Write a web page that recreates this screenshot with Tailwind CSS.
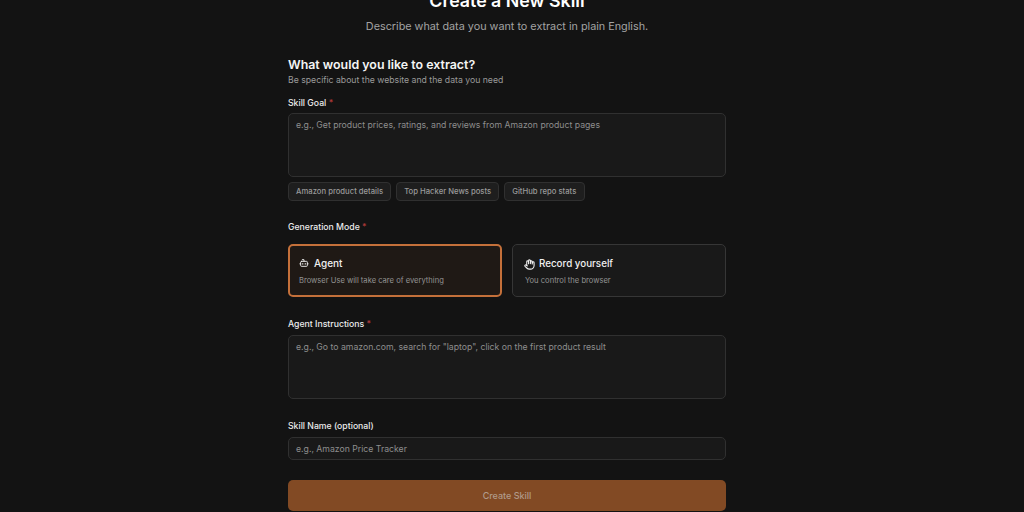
<!DOCTYPE html>
<html lang="en">
<head>
  <meta charset="utf-8" />
  <title>Create a New Skill</title>
  <script src="https://cdn.jsdelivr.net/npm/@tailwindcss/browser@4"></script>
</head>
<body class="bg-[#131313] text-white antialiased font-['Inter',sans-serif] overflow-hidden">
  <main class="h-[512px] overflow-hidden pr-[10px]">
    <div class="w-[438px] mx-auto -mt-[10px]">
      <!-- Heading -->
      <header class="text-center">
        <h1 class="text-[17.8px] leading-[22px] font-semibold">Create a New Skill</h1>
        <p class="mt-[6px] text-[10.8px] leading-[18px] text-[#a3a3a3]">Describe what data you want to extract in plain English.</p>
      </header>

      <section class="mt-[20px]">
        <h2 class="text-[12.4px] leading-[18px] font-semibold text-[#f5f5f5]">What would you like to extract?</h2>
        <p class="text-[8.7px] leading-[12px] text-[#9a9a9a]">Be specific about the website and the data you need</p>

        <!-- Skill goal -->
        <label class="block mt-[11px] text-[8.7px] leading-[12px] font-medium text-[#ececec]">Skill Goal <span class="text-[#b03a3a]">*</span></label>
        <div class="mt-[4px] h-[64px] rounded-[5px] border border-[#303030] bg-[#191919] px-[7px] py-[5px] text-[8.7px] leading-[12px] text-[#8e8e8e]">e.g., Get product prices, ratings, and reviews from Amazon product pages</div>
        <div class="mt-[5px] flex gap-[5px]">
          <span class="h-[19px] px-[7px] flex items-center rounded-[4px] border border-[#303030] bg-[#1e1e1e] text-[7.7px] font-medium text-[#9a9a9a]">Amazon product details</span>
          <span class="h-[19px] px-[7px] flex items-center rounded-[4px] border border-[#303030] bg-[#1e1e1e] text-[7.7px] font-medium text-[#9a9a9a]">Top Hacker News posts</span>
          <span class="h-[19px] pl-[7px] pr-[8px] flex items-center rounded-[4px] border border-[#303030] bg-[#1e1e1e] text-[7.7px] font-medium text-[#9a9a9a]">GitHub repo stats</span>
        </div>

        <!-- Generation mode -->
        <label class="block mt-[20px] text-[8.7px] leading-[12px] font-medium text-[#ececec]">Generation Mode <span class="text-[#b03a3a]">*</span></label>
        <div class="mt-[11px] grid grid-cols-2 gap-[10px]">
          <div class="h-[53px] rounded-[5px] border-2 border-[#c4703a] bg-[#1f1915] px-[9px] pt-[10px]">
            <div class="flex items-center gap-[5px] text-[10px] leading-[14px] font-medium text-[#f0f0f0]">
              <svg class="w-[10px] h-[10px]" viewBox="0 0 24 24" fill="none" stroke="currentColor" stroke-width="2.2" stroke-linecap="round" stroke-linejoin="round"><path d="M12 8V4H8"/><rect x="4" y="8" width="16" height="12" rx="2"/><path d="M2 14h2M20 14h2M15 13v2M9 13v2"/></svg>
              Agent
            </div>
            <p class="mt-[5px] text-[7.6px] leading-[11px] text-[#939393]">Browser Use will take care of everything</p>
          </div>
          <div class="h-[53px] rounded-[5px] border border-[#363636] bg-[#191919] px-[11px] pt-[12px]">
            <div class="flex items-center gap-[5px] text-[9.8px] leading-[14px] font-medium text-[#f0f0f0]">
              <svg class="w-[11px] h-[11px]" viewBox="0 0 24 24" fill="none" stroke="currentColor" stroke-width="2.4" stroke-linecap="round" stroke-linejoin="round"><path d="M18 11V6a2 2 0 0 0-4 0M14 10V4a2 2 0 0 0-4 0v2M10 10.5V6a2 2 0 0 0-4 0v8"/><path d="M18 8a2 2 0 1 1 4 0v6a8 8 0 0 1-8 8h-2c-2.8 0-4.5-.86-5.99-2.34l-3.6-3.6a2 2 0 0 1 2.83-2.82L7 15"/></svg>
              <span class="-ml-px">Record yourself</span>
            </div>
            <p class="mt-[4px] ml-px text-[7.6px] leading-[11px] text-[#939393]">You control the browser</p>
          </div>
        </div>

        <!-- Agent instructions -->
        <label class="block mt-[21px] text-[8.7px] leading-[12px] font-medium text-[#ececec]">Agent Instructions <span class="text-[#b03a3a]">*</span></label>
        <div class="mt-[5px] h-[64px] rounded-[5px] border border-[#303030] bg-[#191919] px-[7px] py-[5px] text-[8.7px] leading-[12px] text-[#8e8e8e]">e.g., Go to amazon.com, search for "laptop", click on the first product result</div>

        <!-- Skill name -->
        <label class="block mt-[21px] text-[8.7px] leading-[12px] font-medium text-[#ececec]">Skill Name (optional)</label>
        <div class="mt-[5px] h-[23px] flex items-center rounded-[5px] border border-[#303030] bg-[#191919] px-[7px] pt-[2px] text-[8.7px] text-[#8e8e8e]">e.g., Amazon Price Tracker</div>

        <button class="mt-[20px] w-full h-[31px] rounded-[5px] bg-[#824a24] text-[9px] font-medium text-[#b09a8a]">Create Skill</button>
      </section>
    </div>
  </main>
</body>
</html>
